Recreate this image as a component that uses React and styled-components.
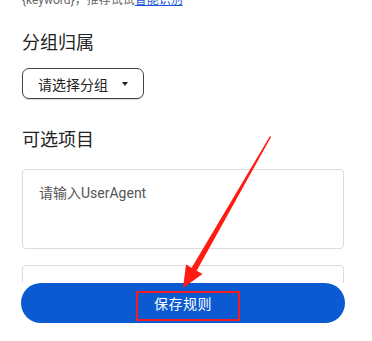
import styled, { createGlobalStyle } from "styled-components";

const GlobalStyle = createGlobalStyle`
  html, body { margin: 0; padding: 0; background: #fff; }
  body {
    font-family: "Roboto", "Noto Sans CJK SC", sans-serif;
    color: #222;
    overflow: hidden;
  }
`;

const Page = styled.div`
  position: relative;
  height: 349px;
  overflow: hidden;
  padding: 0 28px 0 22px;
  margin-top: -8px;
`;

const Hint = styled.p`
  margin: 0;
  font-size: 12px;
  line-height: 16px;
  color: #666;
  a { color: #1a56d6; text-decoration: underline; }
`;

const SectionTitle = styled.h2`
  margin: ${(p) => p.$top}px 0 0;
  font-size: 18px;
  font-weight: 400;
  line-height: 26px;
  color: #222;
`;

const SelectButton = styled.button`
  margin-top: 12px;
  height: 31px;
  width: 122px;
  display: flex;
  align-items: center;
  gap: 10px;
  padding: 0 0 0 15px;
  background: #fff;
  border: 1px solid #444;
  border-radius: 7px;
  box-shadow: 0 1px 1px rgba(0, 0, 0, 0.15);
  font-family: inherit;
  font-size: 14px;
  color: #222;
  cursor: pointer;
`;

const Caret = styled.span`
  width: 0;
  height: 0;
  margin-left: 4px;
  border-left: 3.5px solid transparent;
  border-right: 3.5px solid transparent;
  border-top: 4px solid #222;
`;

const Field = styled.textarea`
  display: block;
  box-sizing: border-box;
  width: 100%;
  height: ${(p) => p.$h}px;
  margin-top: ${(p) => p.$top}px;
  padding: 14px 16px;
  border: 1px solid #dcdcdc;
  border-radius: 4px;
  resize: none;
  font-family: inherit;
  font-size: 14px;
  line-height: 18px;
  color: #222;
  &::placeholder { color: #555; }
`;

const Footer = styled.div`
  position: absolute;
  left: 0;
  right: 0;
  bottom: 0;
  background: #fff;
  padding: 0 27px 18px 21px;
`;

const SaveButton = styled.button`
  position: relative;
  width: 100%;
  height: 40px;
  border: none;
  border-radius: 20px;
  background: #0b5ad2;
  color: #fff;
  font-family: inherit;
  font-size: 14px;
  letter-spacing: 0.5px;
  cursor: pointer;
`;

const Mark = styled.span`
  position: absolute;
  left: 115px;
  top: 8px;
  width: 100px;
  height: 26px;
  border: 2px solid #f21d1d;
`;

const Arrow = styled.svg`
  position: absolute;
  left: 0;
  top: 0;
  pointer-events: none;
`;

export default function App() {
  return (
    <>
      <GlobalStyle />
      <Page>
        <Hint>
          {"{keyword}"}，推荐试试<a href="#">智能识别</a>
        </Hint>
        <SectionTitle $top={22}>分组归属</SectionTitle>
        <SelectButton>
          请选择分组 <Caret />
        </SelectButton>
        <SectionTitle $top={28}>可选项目</SectionTitle>
        <Field $top={16} $h={80} placeholder="请输入UserAgent" />
        <Field $top={16} $h={80} />
        <Footer>
          <SaveButton>
            保存规则
            <Mark />
          </SaveButton>
        </Footer>
      </Page>
      <Arrow width="372" height="341" viewBox="0 0 372 341">
        <polygon
          fill="#ff1a12"
          points="270,136 271,137 196.5,271 191.5,268"
        />
        <polygon fill="#ff1a12" points="183,288 186,264.5 202.5,274" />
      </Arrow>
    </>
  );
}
